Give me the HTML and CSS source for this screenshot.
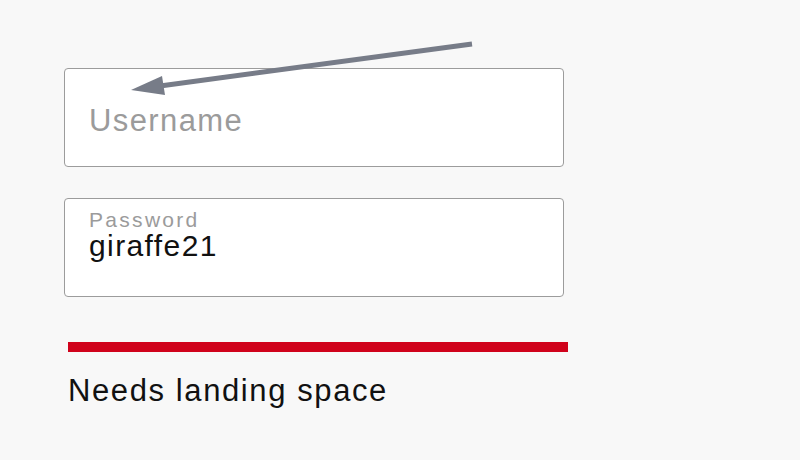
FILE: index.html
```html
<!DOCTYPE html>
<html lang="en">
<head>
  <meta charset="UTF-8">
  <title>Login</title>
  <link rel="stylesheet" href="styles.css">
</head>
<body>

  <main class="form">
    <div class="field">
      <span class="placeholder">Username</span>
    </div>

    <div class="field filled">
      <span class="label">Password</span>
      <span class="value">giraffe21</span>
    </div>

    <div class="meter"></div>
    <p class="hint">Needs landing space</p>
  </main>

  <!-- annotation arrow -->
  <svg class="arrow" width="800" height="460" viewBox="0 0 800 460">
    <line x1="472" y1="44" x2="160" y2="86" stroke="#777c88" stroke-width="5"/>
    <polygon points="131,90 162,76 165,95" fill="#777c88"/>
  </svg>

</body>
</html>
```

FILE: styles.css
```css
body {
  margin: 0;
  background: #f8f8f8;
  font-family: "Liberation Sans", Arial, sans-serif;
  color: #111;
}
.form {
  width: 500px;
  padding: 68px 0 0 64px;
  display: flex;
  flex-direction: column;
}
.field {
  box-sizing: border-box;
  height: 99px;
  margin-bottom: 31px;
  padding: 34px 24px 0;
  background: #fff;
  border: 1px solid #9c9c9c;
  border-radius: 4px;
  display: flex;
  flex-direction: column;
}
.placeholder {
  font-size: 31px;
  line-height: 36px;
  letter-spacing: 1.4px;
  color: #9b9b9b;
}
.filled {
  padding-top: 11px;
}
.label {
  font-size: 21px;
  line-height: 20px;
  letter-spacing: 2.3px;
  color: #9b9b9b;
}
.value {
  font-size: 30px;
  line-height: 31px;
  letter-spacing: 1.4px;
}
.meter {
  width: 500px;
  height: 10px;
  margin: 14px 0 0 4px;
  background: #d0021b;
}
.hint {
  margin: 21px 0 0 4px;
  font-size: 31px;
  line-height: 36px;
  letter-spacing: 1.6px;
}
.arrow {
  position: absolute;
  left: 0;
  top: 0;
}
```
